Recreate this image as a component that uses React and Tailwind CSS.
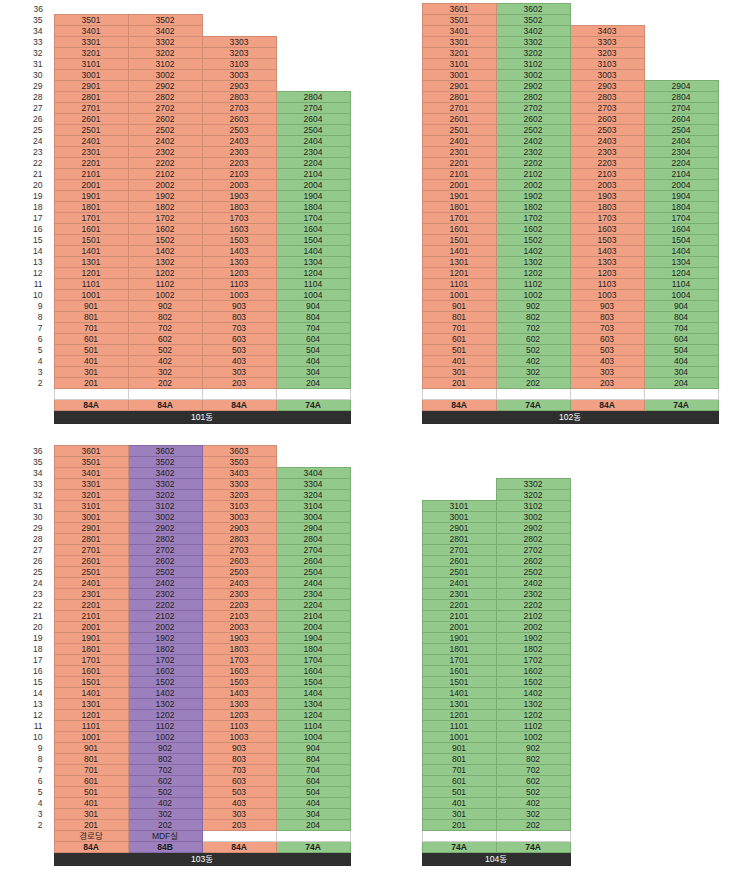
const salmon = "bg-[#f2a084] border-[#cf8c73]";
const green = "bg-[#93ca8b] border-[#79ad72]";
const purple = "bg-[#9c80bd] border-[#8569a6]";
const blank = "bg-white border-[#cfcfcf]";

const buildings = [
  {
    name: "101동",
    labels: true,
    cols: [
      { type: "84A", color: salmon, top: 35 },
      { type: "84A", color: salmon, top: 35 },
      { type: "84A", color: salmon, top: 33 },
      { type: "74A", color: green, top: 28 },
    ],
  },
  {
    name: "102동",
    labels: false,
    cols: [
      { type: "84A", color: salmon, top: 36 },
      { type: "74A", color: green, top: 36 },
      { type: "84A", color: salmon, top: 34 },
      { type: "74A", color: green, top: 29 },
    ],
  },
  {
    name: "103동",
    labels: true,
    cols: [
      { type: "84A", color: salmon, top: 36, ground: "경로당" },
      { type: "84B", color: purple, top: 36, ground: "MDF실" },
      { type: "84A", color: salmon, top: 36 },
      { type: "74A", color: green, top: 34 },
    ],
  },
  {
    name: "104동",
    labels: false,
    cols: [
      { type: "74A", color: green, top: 31 },
      { type: "74A", color: green, top: 33 },
    ],
  },
];

const floors = [];
for (let f = 36; f >= 2; f--) floors.push(f);

function Building({ b }) {
  return (
    <table className={`border-collapse table-fixed ${b.cols.length === 4 ? "w-[350px]" : "w-[202px]"}`}>
      <colgroup>
        <col className="w-[54px]" />
        {b.cols.map((c, i) => (
          <col key={i} className="w-[74px]" />
        ))}
      </colgroup>
      <tbody>
        {floors.map((f) => (
          <tr key={f} className="h-[11px]">
            <td className="p-0 pr-[11px] text-right text-[#333] leading-[10px]">
              {b.labels ? f : ""}
            </td>
            {b.cols.map((c, i) =>
              f <= c.top ? (
                <td key={i} className={`p-0 border text-center leading-[10px] ${c.color}`}>
                  {f * 100 + i + 1}
                </td>
              ) : (
                <td key={i} className="p-0" />
              )
            )}
          </tr>
        ))}
        <tr className="h-[11px]">
          <td className="p-0" />
          {b.cols.map((c, i) =>
            c.ground ? (
              <td key={i} className={`p-0 border text-center leading-[10px] ${c.color}`}>
                {c.ground}
              </td>
            ) : (
              <td key={i} className={`p-0 border ${blank}`} />
            )
          )}
        </tr>
        <tr className="h-[11px]">
          <td className="p-0" />
          {b.cols.map((c, i) => (
            <td key={i} className={`p-0 border text-center font-bold leading-[10px] ${c.color}`}>
              {c.type}
            </td>
          ))}
        </tr>
        <tr className="h-[13px]">
          <td className="p-0" />
          <td
            colSpan={b.cols.length}
            className="p-0 border border-[#2b2b2b] bg-[#2f2f2f] text-white text-center leading-[10px]"
          >
            {b.name}
          </td>
        </tr>
      </tbody>
    </table>
  );
}

export default function App() {
  return (
    <div
      className="min-h-screen bg-white text-[#1e1e1e] text-[8.5px] pt-[3px]"
      style={{ fontFamily: '"Liberation Sans", "Noto Sans CJK KR", sans-serif' }}
    >
      <div className="grid grid-cols-[368px_382px] gap-y-[21px] items-start">
        {buildings.map((b) => (
          <div key={b.name} className={b.name === "104동" ? "self-end" : ""}>
            <Building b={b} />
          </div>
        ))}
      </div>
    </div>
  );
}
